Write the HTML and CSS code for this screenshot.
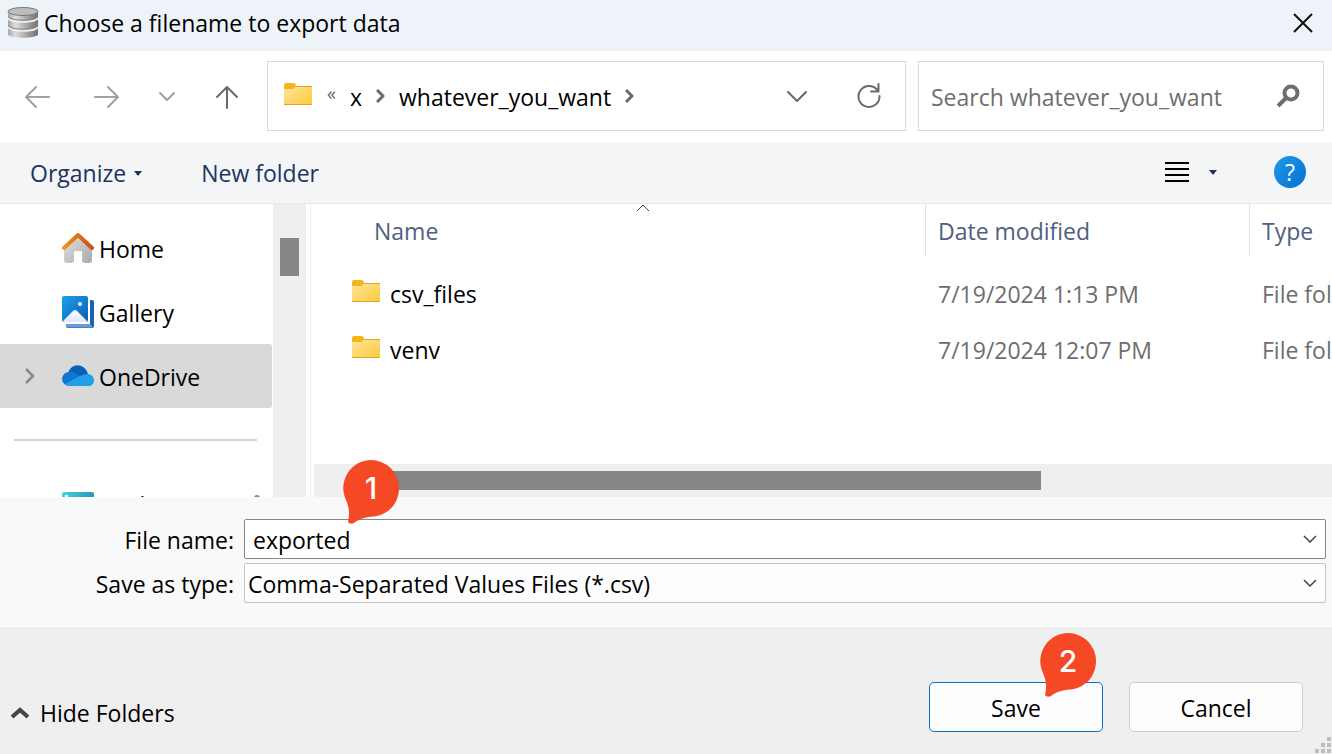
FILE: index.html
```html
<!DOCTYPE html>
<html lang="en">
<head>
<meta charset="utf-8">
<title>Choose a filename to export data</title>
<link rel="stylesheet" href="styles.css">
</head>
<body>
<svg class="defs" width="0" height="0" aria-hidden="true">
  <defs>
    <linearGradient id="folderFill" x1="0" y1="0" x2="1" y2="1"><stop offset="0" stop-color="#ffe69c"/><stop offset="1" stop-color="#fbc93a"/></linearGradient>
    <symbol id="folder" viewBox="0 0 28 24">
      <path d="M0 3Q0 1 2 1h7q3 0 3 3v3H0z" fill="#f5b51d"/>
      <path d="M0 7h9q2 0 3-3h15q1 0 1 1v17q0 1-1 1H1q-1 0-1-1z" fill="url(#folderFill)"/>
      <path d="M12 4.500h16M0 22.500h28" stroke="#dfa62b"/>
    </symbol>
    <symbol id="pin" viewBox="0 0 56 64">
      <path d="M28 0a28 28 0 0 1 28 28c0 14-9 25-22 28-9 1-17 2-23 7q-4 2-6-1c2-9 1-15-2-22A28 28 0 0 1 28 0z" fill="#f54824"/>
    </symbol>
    <symbol id="chev" viewBox="0 0 14 8"><path d="M1 1l6 6 6-6" fill="none" stroke="currentColor" stroke-width="1.500"/></symbol>
  </defs>
</svg>

<header class="titlebar">
  <svg width="32" height="32" viewBox="0 0 32 32" aria-hidden="true">
    <defs><linearGradient id="metal"><stop offset="0" stop-color="#a5a5a5"/><stop offset=".25" stop-color="#dedede"/><stop offset=".6" stop-color="#a8a8a8"/><stop offset="1" stop-color="#707070"/></linearGradient></defs>
    <path d="M1 4v23c0 5 30 5 30 0V4z" fill="url(#metal)"/>
    <path d="M1 11c3 5 27 5 30 0M1 20c3 5 27 5 30 0" fill="none" stroke="#f0f0f0" stroke-width="2"/>
    <path d="M1 9.500c3 5 27 5 30 0M1 18.500c3 5 27 5 30 0" fill="none" stroke="#858585"/>
    <ellipse cx="16" cy="4.500" rx="15" ry="4" fill="#bdbdbd" stroke="#777"/>
  </svg>
  <h1 class="title">Choose a filename to export data</h1>
  <button class="icon-button close" aria-label="Close">
    <svg width="22" height="22" viewBox="0 0 22 22"><path d="M2 2l18 18M20 2L2 20" stroke="#111" stroke-width="2"/></svg>
  </button>
</header>

<nav class="navbar">
  <div class="history">
    <button class="icon-button back" aria-label="Back"><svg width="26" height="24" viewBox="0 0 26 24"><path d="M25 12H2M12 2L2 12l10 10" class="stroke light"/></svg></button>
    <button class="icon-button" aria-label="Forward"><svg width="26" height="24" viewBox="0 0 26 24"><path d="M1 12h23M14 2l10 10-10 10" class="stroke light"/></svg></button>
    <button class="icon-button" aria-label="Recent locations"><svg width="18" height="12" viewBox="0 0 18 12"><path d="M2 2l7 7 7-7" class="stroke light"/></svg></button>
    <button class="icon-button" aria-label="Up"><svg width="24" height="24" viewBox="0 0 24 24"><path d="M12 23V2M2 12L12 2l10 10" class="stroke dark"/></svg></button>
  </div>
  <div class="locations">
    <div class="address">
      <svg class="address-folder" width="28" height="24"><use href="#folder"/></svg>
      <span class="more">«</span>
      <a class="crumb" href="#">x</a>
      <svg width="9" height="14" viewBox="0 0 9 14"><path d="M1 1l6 6-6 6" class="stroke dark thick"/></svg>
      <a class="crumb" href="#">whatever_you_want</a>
      <svg width="9" height="14" viewBox="0 0 9 14"><path d="M1 1l6 6-6 6" class="stroke dark thick"/></svg>
      <button class="icon-button push" aria-label="Previous locations"><svg width="20" height="14" viewBox="0 0 20 14"><path d="M1 3l9 9 9-9" class="stroke dark"/></svg></button>
      <button class="icon-button" aria-label="Refresh"><svg width="24" height="26" viewBox="0 0 24 26"><path d="M21 8A10.500 10.500 0 1 0 22.500 13M21.500 1v7.500H14" class="stroke dark"/></svg></button>
    </div>
    <div class="search">
      <input type="search" class="search-input" aria-label="Search" placeholder="Search whatever_you_want">
      <svg width="24" height="24" viewBox="0 0 24 24" aria-hidden="true"><circle cx="15" cy="9" r="6.500" fill="none" stroke="#6e6e6e" stroke-width="4"/><path d="M10.500 13.500L2 22" stroke="#6e6e6e" stroke-width="4"/></svg>
    </div>
  </div>
</nav>

<div class="commands">
  <button class="command">Organize <svg width="8" height="5" viewBox="0 0 8 5"><path d="M0 0h8L4 5z" fill="#1e3460"/></svg></button>
  <button class="command">New folder</button>
  <button class="icon-button view" aria-label="Change view">
    <svg width="24" height="20" viewBox="0 0 24 20"><path d="M0 1h24M0 7h24M0 13h24M0 19h24" stroke="#000" stroke-width="2"/></svg>
    <svg width="8" height="5" viewBox="0 0 8 5"><path d="M0 0h8L4 5z" fill="#1e3460"/></svg>
  </button>
  <button class="help" aria-label="Help">?</button>
</div>

<main class="browser">
  <aside class="sidebar">
    <ul class="places">
      <li class="place">
        <svg width="32" height="32" viewBox="0 0 32 32"><defs><linearGradient id="wall" x1="0" x2="1" y1="0" y2="1"><stop offset="0" stop-color="#e2e2e2"/><stop offset="1" stop-color="#aaa"/></linearGradient><linearGradient id="roof"><stop offset="0" stop-color="#f0931e"/><stop offset="1" stop-color="#cf4c0c"/></linearGradient></defs><path d="M2 14L16 2l14 12v14q0 3-3 3h-4q-3 0-3-3v-8q0-1-1-1h-6q-1 0-1 1v8q0 3-3 3H5q-3 0-3-3z" fill="url(#wall)"/><path d="M2 16L16 3l14 13" fill="none" stroke="url(#roof)" stroke-width="4" stroke-linecap="round" stroke-linejoin="round"/></svg>
        <span>Home</span>
      </li>
      <li class="place">
        <svg width="32" height="32" viewBox="0 0 32 32"><defs><linearGradient id="photo" x1="0" x2="1" y1="0" y2="1"><stop offset="0" stop-color="#1ba0ec"/><stop offset="1" stop-color="#0a5fb5"/></linearGradient><linearGradient id="hill" x1="0" x2="0" y1="0" y2="1"><stop offset="0" stop-color="#fff"/><stop offset="1" stop-color="#dbe8fa"/></linearGradient></defs><path d="M28 4h2q2 0 2 2v24q0 2-2 2H6q-2 0-2-2v-2h24z" fill="#1762b3"/><path d="M4 28h24l3 3.500H6q-2 0-2-2z" fill="#6e9bd3"/><rect width="26" height="26" rx="2" fill="url(#photo)"/><circle cx="18" cy="8" r="2" fill="#fff"/><path d="M1 25l10-10q2-2 4 0l10 10-1 1H2z" fill="url(#hill)"/></svg>
        <span>Gallery</span>
      </li>
      <li class="place selected">
        <svg class="expander" width="12" height="18" viewBox="0 0 12 18"><path d="M2 2l7 7-7 7" fill="none" stroke="#888" stroke-width="2.500"/></svg>
        <svg width="32" height="32" viewBox="0 0 32 32"><path d="M6 14C8 3 22 2 26 14l-8 6z" fill="#0b61b8"/><path d="M7 26C-2 25-2 14 6 12q5-1 9 2l9 6-12 6z" fill="#0f78d4"/><path d="M3 24l15-8q4-2 8-2c8 1 8 12 0 12H8q-3 0-5-2z" fill="#239fe8"/></svg>
        <span>OneDrive</span>
      </li>
      <li class="divider" role="separator"></li>
      <li class="place">
        <svg width="32" height="24" viewBox="0 0 32 24"><defs><linearGradient id="desk"><stop offset="0" stop-color="#41d4dc"/><stop offset="1" stop-color="#2699bd"/></linearGradient></defs><rect width="32" height="24" rx="2" fill="url(#desk)"/><path d="M3 3h3v3H3zM3 9h3v3H3z" fill="#fff"/></svg>
        <span>Desktop</span>
        <svg class="tack" width="14" height="18" viewBox="0 0 14 18"><path d="M4 3q0-3 3-3t3 3v3l4 4v3H0v-3l4-4zM6 13h2v5H6z" fill="#888"/></svg>
      </li>
    </ul>
    <div class="scroll-v"><div class="thumb-v"></div></div>
  </aside>

  <section class="files">
    <table class="file-table">
      <colgroup><col class="col-name"><col class="col-date"><col class="col-type"></colgroup>
      <thead>
        <tr>
          <th class="name-head">Name<svg class="sort" width="14" height="8" viewBox="0 0 14 8"><path d="M1 7l6-6 6 6" fill="none" stroke="#444"/></svg></th>
          <th class="ruled">Date modified</th>
          <th class="ruled">Type</th>
        </tr>
      </thead>
      <tbody>
        <tr><td><div class="file"><svg width="28" height="24"><use href="#folder"/></svg><span>csv_files</span></div></td><td>7/19/2024 1:13 PM</td><td>File folder</td></tr>
        <tr><td><div class="file"><svg width="28" height="24"><use href="#folder"/></svg><span>venv</span></div></td><td>7/19/2024 12:07 PM</td><td>File folder</td></tr>
      </tbody>
    </table>
    <div class="scroll-h"><div class="thumb-h"></div></div>
  </section>
</main>

<form class="fields">
  <label for="filename">File name:</label>
  <div class="field strong">
    <input id="filename" class="control" type="text" value="exported">
    <svg class="field-arrow" width="14" height="8"><use href="#chev"/></svg>
    <div class="badge badge-name"><svg width="56" height="64"><use href="#pin"/></svg><span>1</span></div>
  </div>
  <label for="filetype">Save as type:</label>
  <div class="field">
    <select id="filetype" class="control"><option>Comma-Separated Values Files (*.csv)</option></select>
    <svg class="field-arrow" width="14" height="8"><use href="#chev"/></svg>
  </div>
</form>

<footer class="actions">
  <button class="hide"><svg width="18" height="12" viewBox="0 0 18 12"><path d="M1 10l8-7 8 7" fill="none" stroke="#444" stroke-width="4"/></svg>Hide Folders</button>
  <div class="save-wrap">
    <button class="button primary">Save</button>
    <div class="badge badge-save"><svg width="56" height="64"><use href="#pin"/></svg><span>2</span></div>
  </div>
  <button class="button">Cancel</button>
  <svg class="grip" width="16" height="16" viewBox="0 0 16 16"><path d="M12 0h4v4h-4zM6 6h4v4H6zM12 6h4v4h-4zM0 12h4v4H0zM6 12h4v4H6zM12 12h4v4h-4z" fill="#bdbdbd"/></svg>
</footer>
</body>
</html>
```
FILE: styles.css
```css
* { box-sizing: border-box; }

body {
  margin: 0;
  height: 100vh;
  display: flex;
  flex-direction: column;
  overflow: hidden;
  background: #fff;
  color: #000;
  font: 23px/32px "Open Sans", "Noto Sans", sans-serif;
}

button, input, select { font: inherit; color: inherit; }
svg { display: block; flex: none; }
.defs { position: absolute; }

.stroke { fill: none; stroke-width: 2; stroke-linecap: round; stroke-linejoin: round; }
.light { stroke: #a0a0a0; }
.dark { stroke: #6a6a6a; }
.thick { stroke-width: 3; stroke-linecap: butt; }

.icon-button {
  display: flex;
  align-items: center;
  justify-content: center;
  padding: 0;
  border: 0;
  background: none;
}

/* Title bar */
.titlebar {
  flex: none;
  display: flex;
  align-items: center;
  gap: 5px;
  height: 51px;
  padding: 0 18px 6px 7px;
  background: #eef3fa;
}
.title { margin: 0; font-size: 23px; font-weight: 400; }
.close { margin-left: auto; }

/* Navigation */
.navbar {
  flex: none;
  display: flex;
  padding: 10px 8px 11px 17px;
}
.history { flex: none; display: flex; gap: 20px; margin-right: 20px; padding-top: 2px; }
.history .icon-button { width: 40px; }
.history .back { margin-right: 10px; }
.locations {
  flex: 1;
  display: grid;
  grid-template-columns: 639fr 406fr;
  gap: 12px;
}
.address {
  display: flex;
  align-items: center;
  gap: 14px;
  height: 70px;
  padding: 0 24px 0 16px;
  border: 1px solid #d6d8da;
}
.address-folder { margin-bottom: 4px; }
.more { margin: 0 0 6px 1px; font-size: 18px; color: #666; }
.crumb { padding-top: 2px; color: inherit; text-decoration: none; }
.push { margin-left: auto; margin-right: 36px; }
.search {
  display: flex;
  align-items: center;
  padding: 0 23px 0 12px;
  border: 1px solid #d6d8da;
}
.search-input {
  flex: 1;
  min-width: 0;
  padding: 2px 0 0;
  border: 0;
  outline: 0;
  background: none;
}
.search-input::placeholder { color: #6e6e6e; opacity: 1; }

/* Command bar */
.commands {
  flex: none;
  display: flex;
  align-items: center;
  height: 62px;
  padding: 0 26px 1px 30px;
  border-bottom: 1px solid #e6e8ea;
  background: #f3f5f7;
}
.command {
  display: flex;
  align-items: center;
  gap: 8px;
  margin-right: 59px;
  padding: 2px 0 0;
  border: 0;
  background: none;
  color: #1e3460;
}
.view { margin-left: auto; margin-right: 57px; gap: 20px; }
.help {
  width: 32px;
  height: 32px;
  padding: 0;
  border: 0;
  border-radius: 50%;
  background: linear-gradient(135deg, #1f9ae6, #0670d2);
  color: #fff;
}

/* Browser */
.browser { flex: 1; display: flex; min-height: 0; }
.sidebar { flex: none; display: flex; width: 306px; overflow: hidden; }
.places { flex: 1; margin: 0; padding: 12px 0 0; list-style: none; }
.place {
  display: flex;
  align-items: center;
  gap: 5px;
  height: 64px;
  margin-right: 1px;
  padding-left: 62px;
}
.place span { padding-top: 2px; }
.selected { padding-left: 24px; background: #d9d9d9; border-radius: 0 3px 3px 0; }
.expander { margin-right: 21px; }
.divider { height: 2px; margin: 31px 16px 31px 14px; background: #d4d4d4; }
.tack { margin-left: auto; margin-right: 8px; }
.scroll-v { width: 33px; padding: 34px 7px; background: #efefef; }
.thumb-v { height: 38px; background: #868686; }

.files {
  flex: 1;
  display: flex;
  flex-direction: column;
  min-width: 0;
  margin-left: 4px;
  padding-left: 3px;
  border-left: 1px solid #f3f3f3;
  overflow: hidden;
}
.file-table {
  width: 100%;
  table-layout: fixed;
  border-spacing: 0;
  white-space: nowrap;
}
.col-date { width: 324px; }
.col-type { width: 83px; }
.file-table th {
  height: 52px;
  padding: 2px 0 0 12px;
  text-align: left;
  font-weight: 400;
  color: #4e6180;
}
.file-table .ruled { border-left: 1px solid #dfe1e3; }
.file-table .name-head { position: relative; padding-left: 60px; }
.sort { position: absolute; top: 0; right: 275px; }
.file-table tbody::before { content: ""; display: block; height: 10px; }
.file-table td { height: 56px; padding: 0 0 0 13px; color: #6e6e6e; }
.file-table td:first-child { padding-left: 38px; color: #000; }
.file { display: flex; align-items: center; gap: 10px; }
.file svg { margin-bottom: 6px; }
.scroll-h { margin-top: auto; height: 33px; padding: 7px 291px 7px 40px; background: #efefef; }
.thumb-h { height: 19px; background: #868686; }

/* Fields */
.fields {
  flex: none;
  display: grid;
  grid-template-columns: 234px 1fr;
  gap: 4px 10px;
  align-items: center;
  padding: 22px 6px 23px 0;
  border-bottom: 1px solid #fff;
  background: #f9f9f9;
}
.fields label { padding-top: 2px; text-align: right; }
.field { position: relative; display: grid; align-items: center; }
.control {
  grid-area: 1 / 1;
  width: 100%;
  height: 40px;
  padding: 2px 40px 0 3px;
  border: 1px solid #c4c4c4;
  border-radius: 2px;
  background: #fdfdfd;
  outline: 0;
  appearance: none;
}
.strong .control { padding-left: 8px; border-color: #868686; background: #fff; }
.field-arrow {
  grid-area: 1 / 1;
  justify-self: end;
  z-index: 1;
  margin-right: 9px;
  color: #444;
  pointer-events: none;
}

.badge {
  position: absolute;
  z-index: 2;
  display: grid;
  color: #fff;
  font: 500 30px/56px Inter, sans-serif;
  text-align: center;
  pointer-events: none;
}
.badge > * { grid-area: 1 / 1; }
.badge-name { left: 99px; top: -59px; }
.badge-save { left: 111px; top: -49px; }

/* Actions */
.actions {
  position: relative;
  flex: none;
  display: flex;
  align-items: flex-end;
  gap: 26px;
  padding: 55px 29px 22px 11px;
  background: #efefef;
}
.hide {
  display: flex;
  align-items: center;
  gap: 11px;
  margin: 0 auto 3px 0;
  padding: 0;
  border: 0;
  background: none;
}
.save-wrap { position: relative; }
.button {
  display: block;
  width: 174px;
  height: 50px;
  padding: 2px 0 0;
  border: 1px solid #cdcdcd;
  border-radius: 5px;
  background: #fdfdfd;
}
.primary { border-color: #0e6fb8; }
.grip { position: absolute; right: 1px; bottom: 1px; }
```
